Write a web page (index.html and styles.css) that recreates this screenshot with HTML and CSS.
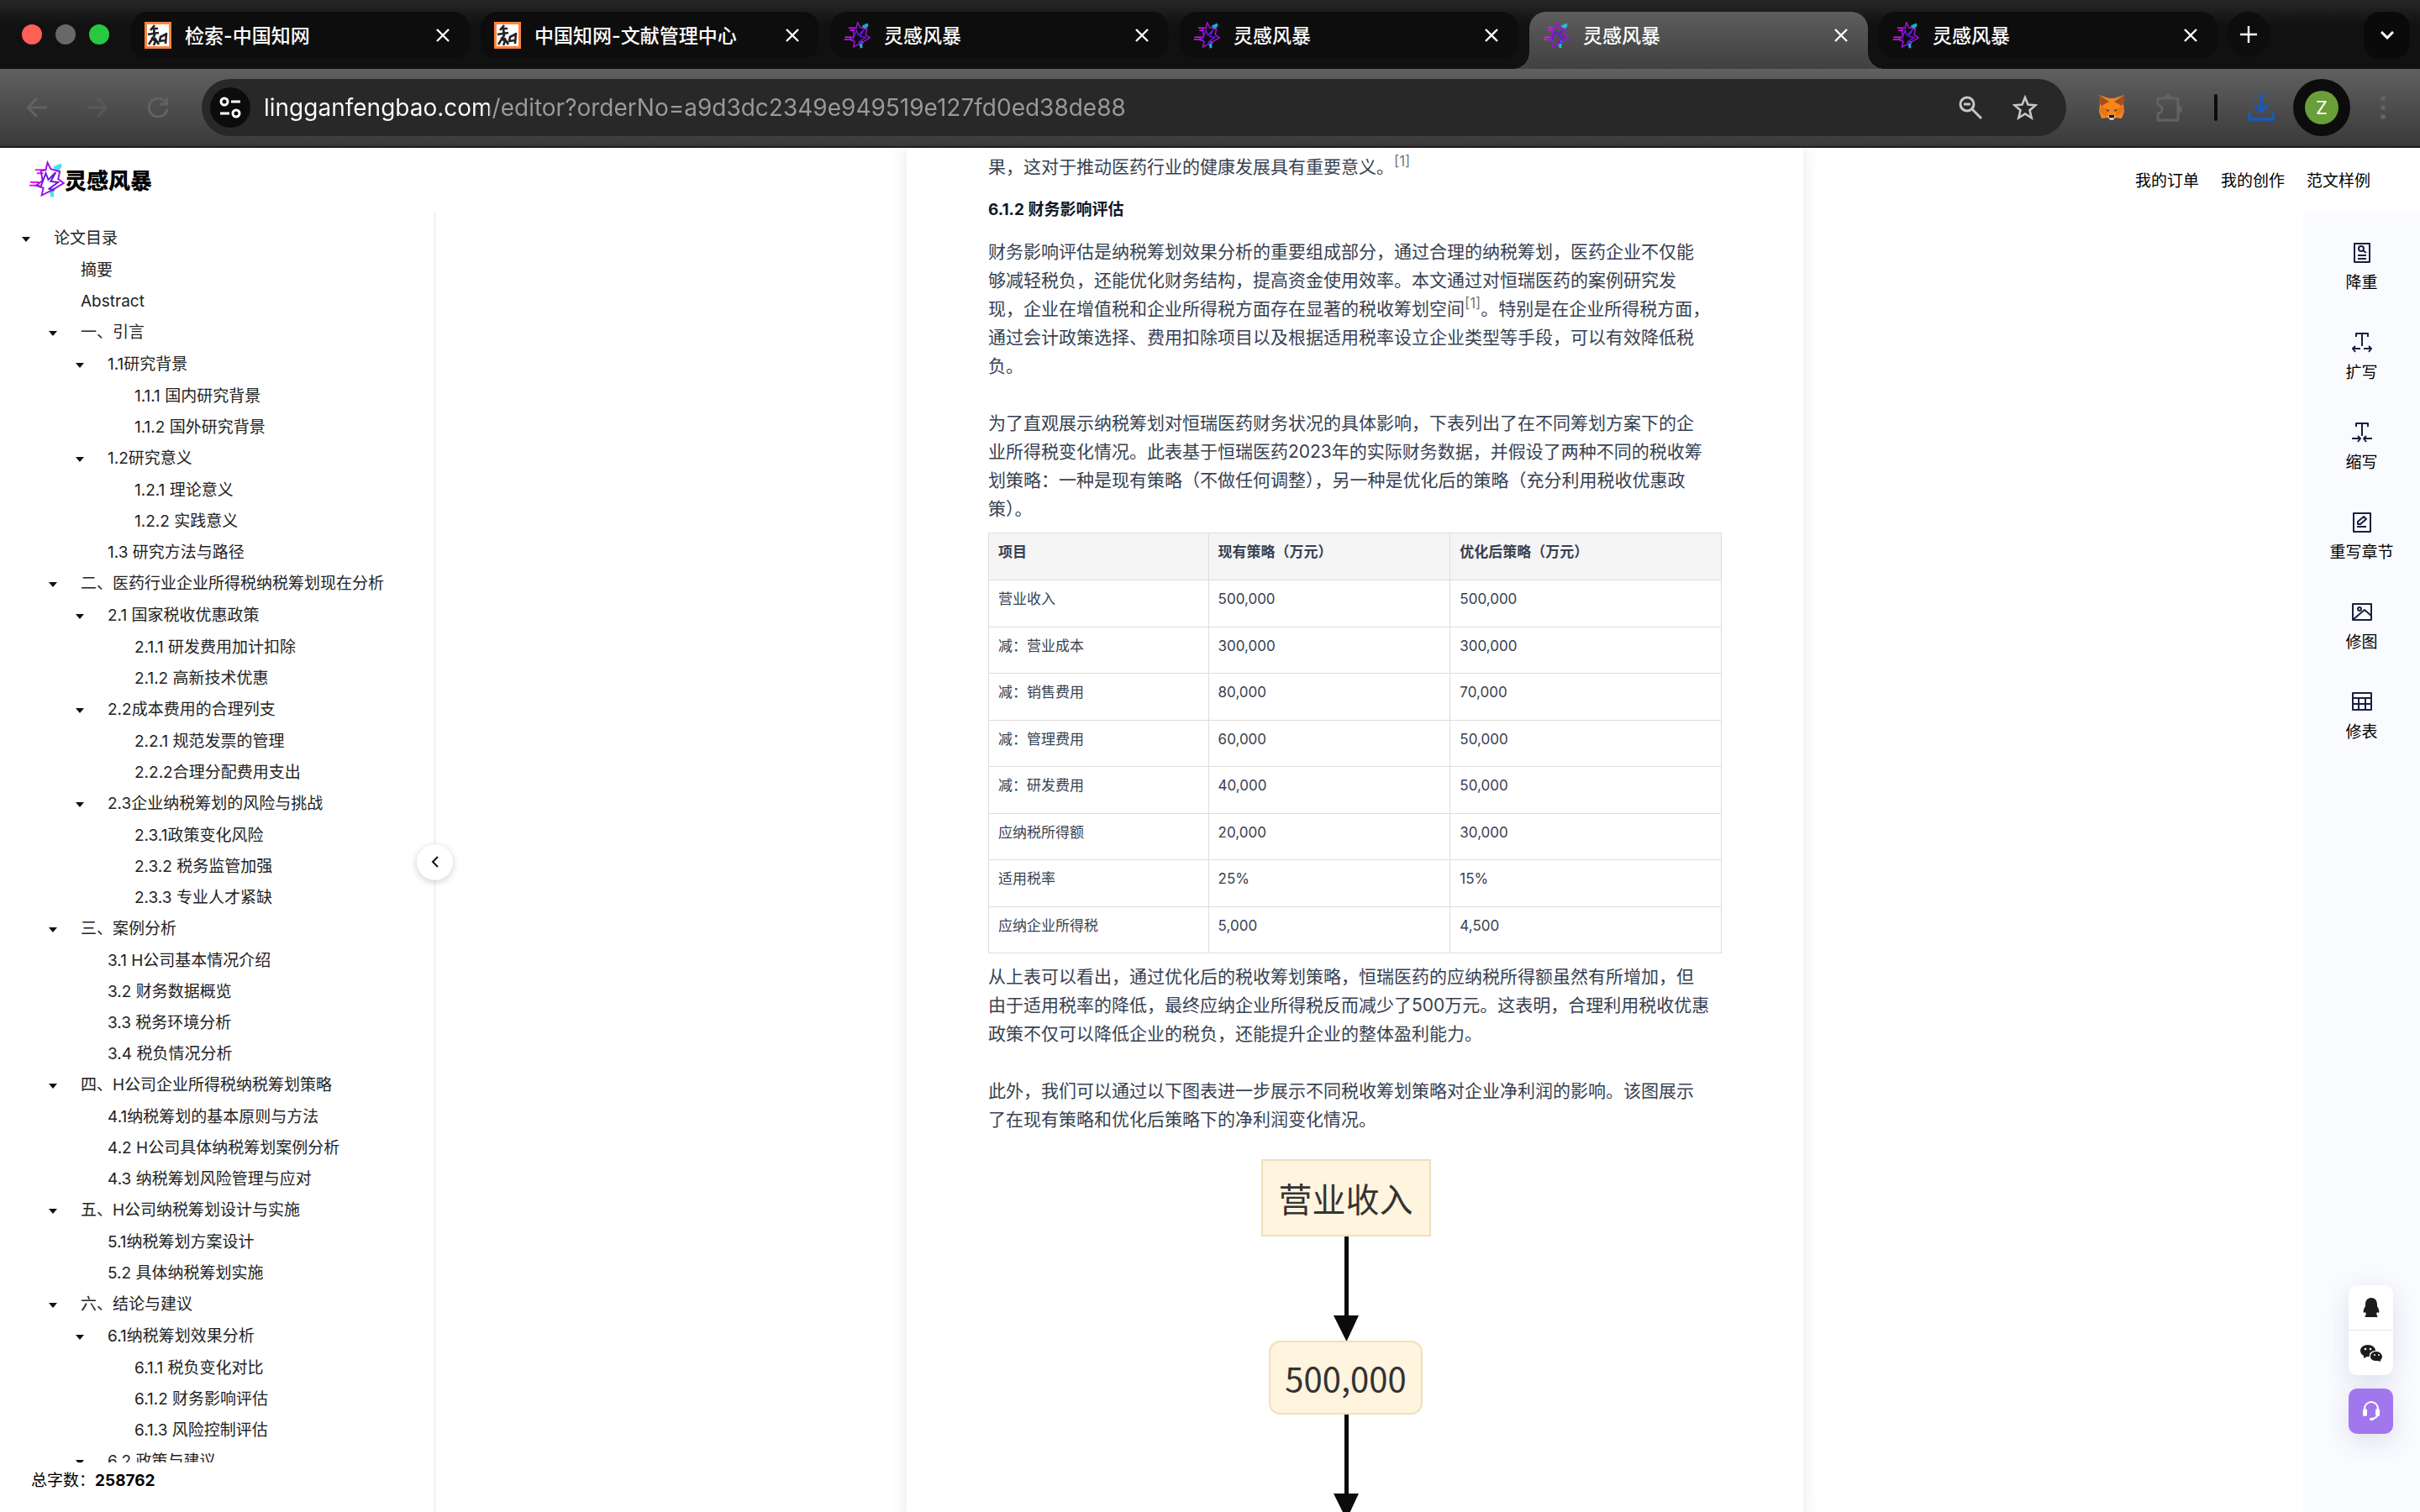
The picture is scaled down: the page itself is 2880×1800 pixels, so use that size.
FILE: index.html
```
<!DOCTYPE html>
<html lang="zh-CN">
<head>
    <meta charset="UTF-8">
    <meta name="viewport" content="width=device-width, initial-scale=1.0">
    <title>灵感风暴</title>
    <link rel="stylesheet" href="styles.css">
</head>
<body>
    <svg class="sprite" aria-hidden="true">
        <symbol id="spark" viewBox="0 0 44 44">
            <path class="glow" d="M31 8l9-4M34 12l5-7M27 40l4-8M28 34l1 9"/>
            <g fill="none" stroke-width="2">
                <path stroke="#e01cf0" d="M1 29h13M2 25h11M8 10h12M10 14h8"/>
                <path stroke="#a012e0" d="M23 1l4 8 11 3-2 9 7 5-15 9-12 6 2-9-9-3 8-6-2-12 6-1z"/>
                <path stroke="#6a18d8" d="M15 30l6-16 3 8 9-9-6 11 9 1-11 8 6 2"/>
            </g>
        </symbol>
        <symbol id="close" viewBox="0 0 16 16">
            <path fill="none" stroke="#fff" stroke-width="2.4" d="M1 1l14 14M15 1L1 15"/>
        </symbol>
        <symbol id="cnki" viewBox="0 0 32 32">
            <path fill="#fff" stroke="#ff8540" stroke-width="3" d="M1.500 1.500h29v29h-29z"/>
            <path fill="none" stroke="#222" stroke-width="2.600" d="M12 4l-5 6M8 8h8M4 15l13-2M11 8l1 8-7 11M8 19l5 4-2 5M12 19l5 8M26 13l-1 13M25 15l-6 3-1 5 7-1"/>
        </symbol>
    </svg>

    <div class="tab-strip">
        <div class="lights">
            <span class="light red"></span>
            <span class="light gray"></span>
            <span class="light green"></span>
        </div>
        <div class="tabs">
            <div class="tab">
                <svg class="favicon"><use href="#cnki"/></svg>
                <button class="tab-title">检索-中国知网</button>
                <button class="tab-close" aria-label="关闭"><svg><use href="#close"/></svg></button>
            </div>
            <div class="tab">
                <svg class="favicon"><use href="#cnki"/></svg>
                <button class="tab-title">中国知网-文献管理中心</button>
                <button class="tab-close" aria-label="关闭"><svg><use href="#close"/></svg></button>
            </div>
            <div class="tab">
                <svg class="favicon"><use href="#spark"/></svg>
                <button class="tab-title">灵感风暴</button>
                <button class="tab-close" aria-label="关闭"><svg><use href="#close"/></svg></button>
            </div>
            <div class="tab">
                <svg class="favicon"><use href="#spark"/></svg>
                <button class="tab-title">灵感风暴</button>
                <button class="tab-close" aria-label="关闭"><svg><use href="#close"/></svg></button>
            </div>
            <div class="tab active">
                <svg class="favicon"><use href="#spark"/></svg>
                <button class="tab-title">灵感风暴</button>
                <button class="tab-close" aria-label="关闭"><svg><use href="#close"/></svg></button>
            </div>
            <div class="tab">
                <svg class="favicon"><use href="#spark"/></svg>
                <button class="tab-title">灵感风暴</button>
                <button class="tab-close" aria-label="关闭"><svg><use href="#close"/></svg></button>
            </div>
        </div>
        <button class="new-tab" aria-label="新标签页">
            <svg width="20" height="20" viewBox="0 0 20 20"><path stroke="#fff" stroke-width="2.400" d="M10 0v20M0 10h20"/></svg>
        </button>
        <button class="tab-search" aria-label="搜索标签页">
            <svg width="16" height="10" viewBox="0 0 16 10"><path fill="none" stroke="#fff" stroke-width="3" d="M1 1l7 7 7-7"/></svg>
        </button>
    </div>

    <div class="toolbar">
        <div class="nav-buttons">
            <button aria-label="后退"><svg width="24" height="24" viewBox="0 0 24 24"><path d="M24 12H2M12 1L1 12l11 11"/></svg></button>
            <button class="dim" aria-label="前进"><svg width="24" height="24" viewBox="0 0 24 24"><path d="M0 12h22M12 1l11 11-11 11"/></svg></button>
            <button aria-label="刷新"><svg width="24" height="24" viewBox="0 0 24 24"><path d="M22 7A11 11 0 1 0 23 14M23 0v8h-9"/></svg></button>
        </div>
        <div class="omnibox">
            <button class="site-info" aria-label="网站信息">
                <svg width="26" height="26" viewBox="0 0 26 26"><g fill="none" stroke="#fff" stroke-width="3"><circle cx="6" cy="6" r="4"/><circle cx="20" cy="20" r="4"/><path d="M14 6h11M1 20h11"/></g></svg>
            </button>
            <input class="url" type="text" aria-label="地址" value="lingganfengbao.com/editor?orderNo=a9d3dc2349e949519e127fd0ed38de88">
            <button aria-label="缩放">
                <svg width="28" height="28" viewBox="0 0 28 28"><g fill="none" stroke="#c7c7c7" stroke-width="3"><circle cx="10" cy="10" r="8"/><path d="M16 16l11 11M6 10h8"/></g></svg>
            </button>
            <button aria-label="收藏">
                <svg width="30" height="30" viewBox="0 0 30 30"><path fill="none" stroke="#c7c7c7" stroke-width="2.600" d="M15 3l3.500 8.500 9 .8-7 6 2.200 9L15 22.500 7.300 27.300l2.200-9-7-6 9-.8z"/></svg>
            </button>
        </div>
        <div class="extensions">
            <button aria-label="MetaMask">
                <svg width="32" height="32" viewBox="0 0 32 32">
                    <path fill="#f6851b" d="M1 1l12 4h6L31 1l-1 11 1 9-3 8-8-1-4 3-4-3-8 1-3-8 1-9z"/>
                    <path fill="#a04f24" d="M1 1l12 8-9 5-3-4zM31 1L19 9l9 5 3-4z"/>
                    <path fill="#e2761b" d="M4 14l7 5-1 8-8-6zM28 14l-7 5 1 8 8-6z"/>
                    <path fill="#233447" d="M9 18l4 1-1 2zM23 18l-4 1 1 2z"/>
                    <path fill="#d7c1b3" d="M11 26h10l-3 5h-4z"/>
                    <path fill="#161616" d="M13 25h6v3h-6z"/>
                </svg>
            </button>
            <button aria-label="扩展程序">
                <svg width="34" height="34" viewBox="0 0 34 34"><path fill="none" stroke="#5f6368" stroke-width="3" stroke-linejoin="round" d="M3 6h24v26H3v-8a5 5 0 0 0 0-10z"/><path fill="#5f6368" d="M11 5a4 4 0 0 1 8 0zM28 15a4 4 0 0 1 0 8z"/></svg>
            </button>
            <span class="divider"></span>
            <button aria-label="下载内容">
                <svg width="32" height="32" viewBox="0 0 32 32"><g fill="none" stroke="#185abc" stroke-width="3.400"><path d="M16 0v21M8 13l8 8 8-8"/><path stroke-linejoin="round" d="M2 22v8h28v-8"/></g></svg>
            </button>
            <button class="profile" aria-label="个人资料"><span>Z</span></button>
            <button aria-label="更多">
                <svg width="6" height="28" viewBox="0 0 6 28"><g fill="#5f6368"><circle cx="3" cy="3" r="3"/><circle cx="3" cy="14" r="3"/><circle cx="3" cy="25" r="3"/></g></svg>
            </button>
        </div>
    </div>

    <div class="workspace">
        <header class="site-header">
            <a class="logo" href="#"><svg><use href="#spark"/></svg>灵感风暴</a>
            <nav class="site-nav">
                <a href="#">我的订单</a>
                <a href="#">我的创作</a>
                <a href="#">范文样例</a>
            </nav>
        </header>

        <aside class="sidebar">
            <div class="outline">
                <ul>
                    <li><div class="row"><button class="caret" aria-label="折叠"></button><a href="#">论文目录</a></div>
                        <ul>
                            <li class="leaf"><a href="#">摘要</a></li>
                            <li class="leaf"><a href="#">Abstract</a></li>
                            <li><div class="row"><button class="caret" aria-label="折叠"></button><a href="#">一、引言</a></div>
                                <ul>
                                    <li><div class="row"><button class="caret" aria-label="折叠"></button><a href="#">1.1研究背景</a></div>
                                        <ul>
                                            <li class="leaf"><a href="#">1.1.1 国内研究背景</a></li>
                                            <li class="leaf"><a href="#">1.1.2 国外研究背景</a></li>
                                        </ul>
                                    </li>
                                    <li><div class="row"><button class="caret" aria-label="折叠"></button><a href="#">1.2研究意义</a></div>
                                        <ul>
                                            <li class="leaf"><a href="#">1.2.1 理论意义</a></li>
                                            <li class="leaf"><a href="#">1.2.2 实践意义</a></li>
                                        </ul>
                                    </li>
                                    <li class="leaf"><a href="#">1.3 研究方法与路径</a></li>
                                </ul>
                            </li>
                            <li><div class="row"><button class="caret" aria-label="折叠"></button><a href="#">二、医药行业企业所得税纳税筹划现在分析</a></div>
                                <ul>
                                    <li><div class="row"><button class="caret" aria-label="折叠"></button><a href="#">2.1 国家税收优惠政策</a></div>
                                        <ul>
                                            <li class="leaf"><a href="#">2.1.1 研发费用加计扣除</a></li>
                                            <li class="leaf"><a href="#">2.1.2 高新技术优惠</a></li>
                                        </ul>
                                    </li>
                                    <li><div class="row"><button class="caret" aria-label="折叠"></button><a href="#">2.2成本费用的合理列支</a></div>
                                        <ul>
                                            <li class="leaf"><a href="#">2.2.1 规范发票的管理</a></li>
                                            <li class="leaf"><a href="#">2.2.2合理分配费用支出</a></li>
                                        </ul>
                                    </li>
                                    <li><div class="row"><button class="caret" aria-label="折叠"></button><a href="#">2.3企业纳税筹划的风险与挑战</a></div>
                                        <ul>
                                            <li class="leaf"><a href="#">2.3.1政策变化风险</a></li>
                                            <li class="leaf"><a href="#">2.3.2 税务监管加强</a></li>
                                            <li class="leaf"><a href="#">2.3.3 专业人才紧缺</a></li>
                                        </ul>
                                    </li>
                                </ul>
                            </li>
                            <li><div class="row"><button class="caret" aria-label="折叠"></button><a href="#">三、案例分析</a></div>
                                <ul>
                                    <li class="leaf"><a href="#">3.1 H公司基本情况介绍</a></li>
                                    <li class="leaf"><a href="#">3.2 财务数据概览</a></li>
                                    <li class="leaf"><a href="#">3.3 税务环境分析</a></li>
                                    <li class="leaf"><a href="#">3.4 税负情况分析</a></li>
                                </ul>
                            </li>
                            <li><div class="row"><button class="caret" aria-label="折叠"></button><a href="#">四、H公司企业所得税纳税筹划策略</a></div>
                                <ul>
                                    <li class="leaf"><a href="#">4.1纳税筹划的基本原则与方法</a></li>
                                    <li class="leaf"><a href="#">4.2 H公司具体纳税筹划案例分析</a></li>
                                    <li class="leaf"><a href="#">4.3 纳税筹划风险管理与应对</a></li>
                                </ul>
                            </li>
                            <li><div class="row"><button class="caret" aria-label="折叠"></button><a href="#">五、H公司纳税筹划设计与实施</a></div>
                                <ul>
                                    <li class="leaf"><a href="#">5.1纳税筹划方案设计</a></li>
                                    <li class="leaf"><a href="#">5.2 具体纳税筹划实施</a></li>
                                </ul>
                            </li>
                            <li><div class="row"><button class="caret" aria-label="折叠"></button><a href="#">六、结论与建议</a></div>
                                <ul>
                                    <li><div class="row"><button class="caret" aria-label="折叠"></button><a href="#">6.1纳税筹划效果分析</a></div>
                                        <ul>
                                            <li class="leaf"><a href="#">6.1.1 税负变化对比</a></li>
                                            <li class="leaf"><a href="#">6.1.2 财务影响评估</a></li>
                                            <li class="leaf"><a href="#">6.1.3 风险控制评估</a></li>
                                        </ul>
                                    </li>
                                    <li><div class="row"><button class="caret" aria-label="折叠"></button><a href="#">6.2 政策与建议</a></div></li>
                                </ul>
                            </li>
                        </ul>
                    </li>
                </ul>
            </div>
            <div class="word-count">总字数：<strong>258762</strong></div>
            <button class="collapse" aria-label="收起目录">
                <svg width="10" height="14" viewBox="0 0 10 14"><path fill="none" stroke="#111" stroke-width="2" d="M8 1L2 7l6 6"/></svg>
            </button>
        </aside>

        <main class="editor">
            <article class="paper">
                <p>果，这对于推动医药行业的健康发展具有重要意义。<sup>[1]</sup></p>
                <h4>6.1.2 财务影响评估</h4>
                <p>财务影响评估是纳税筹划效果分析的重要组成部分，通过合理的纳税筹划，医药企业不仅能<br>够减轻税负，还能优化财务结构，提高资金使用效率。本文通过对恒瑞医药的案例研究发<br>现，企业在增值税和企业所得税方面存在显著的税收筹划空间<sup>[1]</sup>。特别是在企业所得税方面，<br>通过会计政策选择、费用扣除项目以及根据适用税率设立企业类型等手段，可以有效降低税<br>负。</p>
                <p class="spaced">为了直观展示纳税筹划对恒瑞医药财务状况的具体影响，下表列出了在不同筹划方案下的企<br>业所得税变化情况。此表基于恒瑞医药2023年的实际财务数据，并假设了两种不同的税收筹<br>划策略：一种是现有策略（不做任何调整），另一种是优化后的策略（充分利用税收优惠政<br>策）。</p>
                <table>
                    <thead>
                        <tr><th>项目</th><th>现有策略（万元）</th><th>优化后策略（万元）</th></tr>
                    </thead>
                    <tbody>
                        <tr><td>营业收入</td><td>500,000</td><td>500,000</td></tr>
                        <tr><td>减：营业成本</td><td>300,000</td><td>300,000</td></tr>
                        <tr><td>减：销售费用</td><td>80,000</td><td>70,000</td></tr>
                        <tr><td>减：管理费用</td><td>60,000</td><td>50,000</td></tr>
                        <tr><td>减：研发费用</td><td>40,000</td><td>50,000</td></tr>
                        <tr><td>应纳税所得额</td><td>20,000</td><td>30,000</td></tr>
                        <tr><td>适用税率</td><td>25%</td><td>15%</td></tr>
                        <tr><td>应纳企业所得税</td><td>5,000</td><td>4,500</td></tr>
                    </tbody>
                </table>
                <p>从上表可以看出，通过优化后的税收筹划策略，恒瑞医药的应纳税所得额虽然有所增加，但<br>由于适用税率的降低，最终应纳企业所得税反而减少了500万元。这表明，合理利用税收优惠<br>政策不仅可以降低企业的税负，还能提升企业的整体盈利能力。</p>
                <p class="spaced">此外，我们可以通过以下图表进一步展示不同税收筹划策略对企业净利润的影响。该图展示<br>了在现有策略和优化后策略下的净利润变化情况。</p>
                <div class="flowchart">
                    <div class="node">营业收入</div>
                    <svg width="32" height="124" viewBox="0 0 32 124"><path fill="#0b0b0b" d="M14 0h5v94h12l-14 30h-1L1 94h13z"/></svg>
                    <div class="node rounded">500,000</div>
                    <svg width="32" height="124" viewBox="0 0 32 124"><path fill="#0b0b0b" d="M14 0h5v94h12l-14 30h-1L1 94h13z"/></svg>
                </div>
            </article>
        </main>

        <aside class="tool-rail">
            <button class="tool">
                <svg viewBox="0 0 24 24"><path d="M3 1h18v22H3zM7 15h10M7 19h10"/><circle cx="11" cy="7" r="3"/><path d="M13 9l4 3"/></svg>
                降重
            </button>
            <button class="tool">
                <svg viewBox="0 0 24 24"><path d="M5 5V1h14v4M12 1v15M10 19H1M4 16l-3 3 3 4M14 19h9M20 16l3 3-3 4"/></svg>
                扩写
            </button>
            <button class="tool">
                <svg viewBox="0 0 24 24"><path d="M5 5V1h14v4M12 1v15M0 19h10M7 16l3 3-3 4M24 19H14M17 16l-3 3 3 4"/></svg>
                缩写
            </button>
            <button class="tool">
                <svg viewBox="0 0 24 24"><path d="M2 1h20v22H2zM6 17h11M7 14v-3l7-6 3 3-7 6z"/></svg>
                重写章节
            </button>
            <button class="tool">
                <svg viewBox="0 0 24 24"><path d="M1 2h22v19H1zM2 20l13-11 8 7"/><circle cx="9" cy="8" r="2"/></svg>
                修图
            </button>
            <button class="tool">
                <svg viewBox="0 0 24 24"><path d="M1 1h22v20H1zM1 7h22M1 14h22M8 7v14M16 7v14"/></svg>
                修表
            </button>
        </aside>

        <div class="contact">
            <div class="contact-card">
                <button aria-label="QQ">
                    <svg width="20" height="24" viewBox="0 0 20 24"><path fill="#1c1c1c" d="M10 0c5 0 7 4 7 8v2c2 3 3 6 2 8-1 0-1-1-2-1l-1 3c2 1 2 3 0 3H4c-2 0-2-2 0-3l-1-3c-1 0-1 1-2 1-1-2 0-5 2-8V8c0-4 2-8 7-8z"/></svg>
                </button>
                <button aria-label="微信">
                    <svg width="26" height="22" viewBox="0 0 26 22"><path fill="#1c1c1c" d="M9 1c5 0 9 3 9 7-5 0-8 3-7 7H8l-4 2v-3C2 13 0 11 0 8c0-4 4-7 9-7z"/><path fill="#1c1c1c" d="M19 9c4 0 7 3 7 6 0 2-1 3-2 4v2l-3-1h-2c-4 0-7-2-7-5 0-4 3-6 7-6z"/><g fill="#fff"><circle cx="6" cy="6" r="1.300"/><circle cx="12" cy="6" r="1.300"/><circle cx="17" cy="13" r="1"/><circle cx="22" cy="13" r="1"/></g></svg>
                </button>
            </div>
            <button class="support" aria-label="在线客服">
                <svg width="22" height="24" viewBox="0 0 22 24"><g fill="none" stroke="#fff" stroke-width="2"><path d="M3 11v-2a8 8 0 0 1 16 0v6c0 3-3 6-8 6"/></g><g fill="#fff"><rect x="1" y="9" width="5" height="9" rx="2"/><rect x="16" y="9" width="5" height="9" rx="2"/><rect x="9" y="20" width="5" height="3" rx="1"/></g></svg>
            </button>
        </div>
    </div>
</body>
</html>
```
FILE: styles.css
```
* {
    box-sizing: border-box;
    margin: 0;
    padding: 0;
}
html, body {
    height: 100%;
}
body {
    display: flex;
    flex-direction: column;
    overflow: hidden;
    font-family: Inter, "Noto Sans CJK SC", sans-serif;
    font-size: 19px;
    color: #111;
    background: #fff;
}
button {
    display: flex;
    align-items: center;
    justify-content: center;
    font: inherit;
    color: inherit;
    background: none;
    border: none;
    cursor: pointer;
}
a {
    color: inherit;
    text-decoration: none;
}
ul {
    list-style: none;
}
.sprite {
    display: none;
}
.glow {
    fill: none;
    stroke: #19d8f5;
    stroke-width: 4;
    opacity: 0.8;
}

/* browser window */
.tab-strip {
    display: flex;
    align-items: flex-start;
    height: 82px;
    flex-shrink: 0;
    padding: 14px 12px 0 26px;
    background: linear-gradient(#262626, #111 30px);
}
.lights {
    display: flex;
    gap: 16px;
    padding-top: 15px;
    margin-right: 26px;
}
.light {
    width: 24px;
    height: 24px;
    border-radius: 50%;
}
.red {
    background: #ff5f57;
}
.gray {
    background: #686868;
}
.green {
    background: #28c840;
}
.tabs {
    display: flex;
    gap: 13px;
}
.tab {
    position: relative;
    display: flex;
    align-items: center;
    width: 403px;
    height: 56px;
    padding: 0 24px 0 16px;
    border-radius: 20px;
    background: #0d0d0d;
    color: #fff;
}
.tab.active {
    height: 68px;
    padding-bottom: 12px;
    border-radius: 20px 20px 0 0;
    background: linear-gradient(#5d5d5d, #404040);
}
/* outward curves at the foot of the selected tab */
.tab.active::before,
.tab.active::after {
    content: "";
    position: absolute;
    bottom: 0;
    width: 20px;
    height: 20px;
}
.tab.active::before {
    right: 100%;
    background: radial-gradient(circle at 0 0, transparent 20px, #444 20px);
}
.tab.active::after {
    left: 100%;
    background: radial-gradient(circle at 100% 0, transparent 20px, #444 20px);
}
.favicon {
    width: 32px;
    height: 32px;
    margin-right: 16px;
}
.tab-title {
    flex: 1;
    justify-content: flex-start;
    padding-bottom: 2px;
    font-size: 23px;
    font-weight: 500;
}
.tab-close svg {
    width: 16px;
    height: 16px;
}
.new-tab {
    width: 52px;
    height: 54px;
    margin-left: 11px;
    border-radius: 50%;
    background: #0d0d0d;
}
.tab-search {
    width: 55px;
    height: 56px;
    margin-left: auto;
    border-radius: 20px;
    background: #0a0a0a;
}
.toolbar {
    display: flex;
    align-items: center;
    height: 94px;
    flex-shrink: 0;
    padding: 0 41px 0 32px;
    background: linear-gradient(#606060, #3a3a3a);
    border-bottom: 2px solid #1d1b1c;
}
.nav-buttons {
    display: flex;
    gap: 48px;
    margin-right: 40px;
}
.nav-buttons path {
    fill: none;
    stroke: #5f6368;
    stroke-width: 3;
}
.nav-buttons .dim {
    opacity: 0.5;
}
.omnibox {
    display: flex;
    flex: 1;
    align-items: center;
    gap: 36px;
    height: 68px;
    padding: 0 34px 0 10px;
    border-radius: 34px;
    background: #282828;
}
.site-info {
    width: 48px;
    height: 48px;
    margin-right: -20px;
    border-radius: 50%;
    background: #0c0c0c;
}
.url {
    flex: 1;
    font: 28px Inter, sans-serif;
    border: none;
    outline: none;
    background: linear-gradient(90deg, #fff 268px, #9a9a9a 268px);
    background-clip: text;
    -webkit-background-clip: text;
    color: transparent;
}
.extensions {
    display: flex;
    align-items: center;
    gap: 36px;
    margin-left: 38px;
}
.divider {
    width: 4px;
    height: 32px;
    border-radius: 2px;
    background: #0c0c0c;
}
.profile {
    width: 68px;
    height: 68px;
    margin-left: -14px;
    border-radius: 50%;
    background: #0c0c0c;
}
.profile span {
    width: 40px;
    border-radius: 50%;
    background: #689f38;
    color: #fff;
    font-size: 22px;
    line-height: 40px;
}

/* page */
.workspace {
    position: relative;
    display: grid;
    grid-template-columns: 518px 1fr 139px;
    grid-template-rows: 77px 1fr;
    flex: 1;
    min-height: 0;
}
.site-header {
    z-index: 1;
    grid-area: 1 / 1 / 2 / 4;
    display: flex;
    align-items: center;
    justify-content: space-between;
    padding: 0 59px 2px 34px;
}
.logo {
    display: flex;
    align-items: center;
    font-size: 26px;
    font-weight: 900;
    color: #000;
}
.logo svg {
    width: 43px;
    height: 46px;
}
.site-nav {
    display: flex;
    gap: 26px;
    color: #000;
}
.sidebar {
    position: relative;
    grid-area: 2 / 1;
    display: flex;
    flex-direction: column;
    min-height: 0;
    border-right: 1px solid #e8e8e8;
}
.outline {
    flex: 1;
    overflow: hidden;
    padding: 12px 0 0 15px;
    color: #222;
    line-height: 37px;
    white-space: nowrap;
}
.outline ul ul {
    padding: 1px 0 0 32px;
}
.row {
    display: flex;
    height: 37px;
}
.leaf {
    height: 37px;
    padding-left: 49px;
}
.caret {
    width: 32px;
    margin-right: 17px;
    padding-top: 3px;
}
.caret::before {
    content: "";
    border: 5px solid transparent;
    border-top: 6px solid #111;
    border-bottom: none;
}
.word-count {
    height: 59px;
    padding-left: 37px;
    color: #000;
    line-height: 44px;
}
.collapse {
    position: absolute;
    top: calc(50% - 22px);
    right: -22px;
    z-index: 2;
    width: 43px;
    height: 43px;
    border-radius: 50%;
    background: #fff;
    box-shadow: 0 2px 8px rgba(0, 0, 0, 0.2);
}
.editor {
    grid-area: 1 / 2 / 3 / 3;
    display: flex;
    justify-content: center;
    overflow: hidden;
    padding-right: 34px;
}
.paper {
    width: 1067px;
    height: fit-content;
    padding: 6px 97px 0;
    background: #fff;
    box-shadow: 0 0 20px rgba(0, 0, 0, 0.1);
    color: #374151;
    font-size: 21px;
    line-height: 34px;
    white-space: nowrap;
}
.paper h4 {
    margin: 17px 0 16px;
    font-size: 19px;
    color: #111827;
}
.paper .spaced {
    margin-top: 34px;
}
sup {
    font-size: 17px;
    line-height: 0;
    color: #777;
}
table {
    width: 100%;
    margin: 11px 0;
    table-layout: fixed;
    border-collapse: collapse;
    font-size: 17px;
    line-height: 26px;
}
th, td {
    padding: 9px 11px 19px;
    border: 1px solid #ddd;
    text-align: left;
}
tr:nth-child(odd) > * {
    padding-bottom: 20px;
}
th {
    width: 37%;
    background: #f5f5f5;
}
th:first-child {
    width: 30%;
}
th:nth-child(2) {
    width: 33%;
}
.flowchart {
    display: flex;
    flex-direction: column;
    align-items: center;
    margin-top: 30px;
    padding-right: 22px;
}
.node {
    padding: 0 19px;
    border: 2px solid #f0dfbb;
    background: #fff4dd;
    color: #333;
    font-family: "Noto Sans CJK SC", sans-serif;
    font-size: 40px;
    line-height: 88px;
}
.node.rounded {
    padding: 0 17px;
    border-radius: 14px;
    line-height: 84px;
}
.tool-rail {
    grid-area: 2 / 3;
    display: flex;
    flex-direction: column;
    gap: 47px;
    padding-top: 36px;
    background: #fafbff;
}
.tool {
    flex-direction: column;
    gap: 12px;
    line-height: 24px;
    color: #000;
}
.tool svg {
    width: 24px;
    height: 24px;
    fill: none;
    stroke: #182040;
    stroke-width: 2;
    stroke-linejoin: round;
}
.contact {
    position: absolute;
    right: 32px;
    bottom: 93px;
    z-index: 2;
    width: 53px;
}
.contact-card,
.support {
    border-radius: 10px;
    box-shadow: 0 8px 30px rgba(60, 80, 120, 0.16);
}
.contact-card {
    margin-bottom: 16px;
    background: #fff;
}
.contact-card button {
    width: 100%;
    height: 53px;
}
.contact-card button + button {
    height: 54px;
    border-top: 1px solid #e5e5e5;
}
.support {
    width: 53px;
    height: 54px;
    background: #a177ee;
}
```
